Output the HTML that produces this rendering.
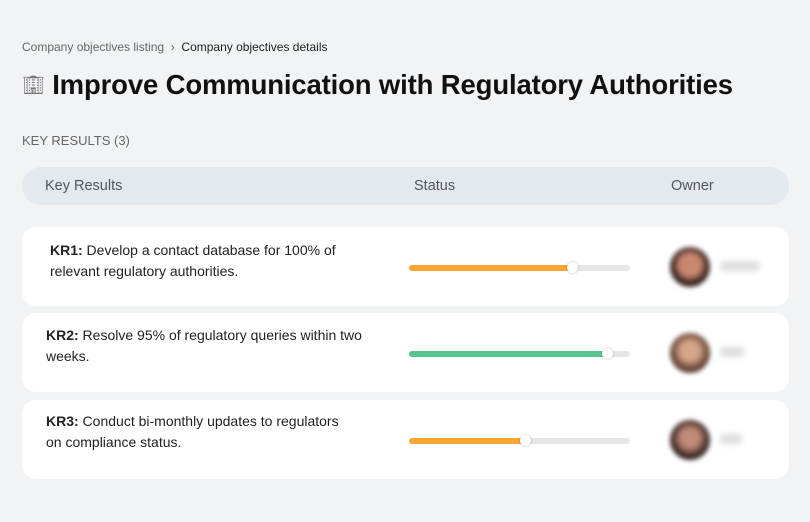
<!DOCTYPE html><html><head><style>
body{margin:0;width:810px;height:522px;background:#f2f3f5;font-family:"Liberation Sans",sans-serif;position:relative;overflow:hidden}
.a{position:absolute}
.bc{left:22px;top:40px;font-size:12px;color:#666}
.bc b{font-weight:normal;color:#222}
h1{position:absolute;left:22px;top:69px;margin:0;font-size:27.5px;font-weight:bold;color:#111;letter-spacing:-0.15px}
.kr{left:22px;top:133px;font-size:13px;color:#666}
.hd{left:22px;top:167px;width:767px;height:38px;background:#e4e9f0;border-radius:19px;font-size:14.5px;color:#555}
.card{left:22px;width:767px;height:79px;background:#fff;border-radius:14px}
.t{font-size:14px;color:#222;line-height:21px}
.bar{left:387px;width:221px;height:6px;border-radius:3px;background:#e6e6e6;top:38px}
.fill{height:6px;border-radius:3px}
.knob{width:11px;height:11px;border-radius:50%;background:#fff;box-shadow:0 0 2px rgba(0,0,0,.3);top:-3px}
.av{left:648px;top:20px;width:40px;height:40px;border-radius:50%;filter:blur(2.5px)}
.nm{left:698px;top:34px;width:40px;height:10px;background:#ddd;filter:blur(3px);border-radius:4px}
</style></head><body>
<div class="a bc">Company objectives listing &nbsp;›&nbsp; <b>Company objectives details</b></div>
<h1><span style="font-size:18px;color:#777;font-weight:normal;vertical-align:3px">&#x1F3E2;&#xFE0E;</span> Improve Communication with Regulatory Authorities</h1>
<div class="a kr">KEY RESULTS (3)</div>
<div class="a hd"><span class="a" style="left:23px;top:11px">Key Results</span><span class="a" style="left:392px;top:11px">Status</span><span class="a" style="left:649px;top:11px">Owner</span></div>

<div class="a card" style="top:227px"><div class="a t" style="left:28px;top:13px;width:300px"><b>KR1:</b> Develop a contact database for 100% of relevant regulatory authorities.</div>
<div class="a bar"><div class="fill" style="width:163px;background:#f9a633"></div><div class="a knob" style="left:158px"></div></div>
<div class="a av" style="background:radial-gradient(circle at 50% 45%,#c98770 0 35%,#3a2520 60%)"></div><div class="a nm"></div></div>

<div class="a card" style="top:313px"><div class="a t" style="left:24px;top:12px;width:335px"><b>KR2:</b> Resolve 95% of regulatory queries within two weeks.</div>
<div class="a bar"><div class="fill" style="width:198px;background:#57c58d"></div><div class="a knob" style="left:193px"></div></div>
<div class="a av" style="background:radial-gradient(circle at 50% 45%,#d4a58a 0 30%,#5a3a2c 65%)"></div><div class="a nm" style="width:24px"></div></div>

<div class="a card" style="top:400px"><div class="a t" style="left:24px;top:11px;width:300px"><b>KR3:</b> Conduct bi-monthly updates to regulators on compliance status.</div>
<div class="a bar"><div class="fill" style="width:116px;background:#f9a633"></div><div class="a knob" style="left:111px"></div></div>
<div class="a av" style="background:radial-gradient(circle at 50% 45%,#c08a78 0 30%,#2f1e1c 65%)"></div><div class="a nm" style="width:22px"></div></div>
</body></html>
